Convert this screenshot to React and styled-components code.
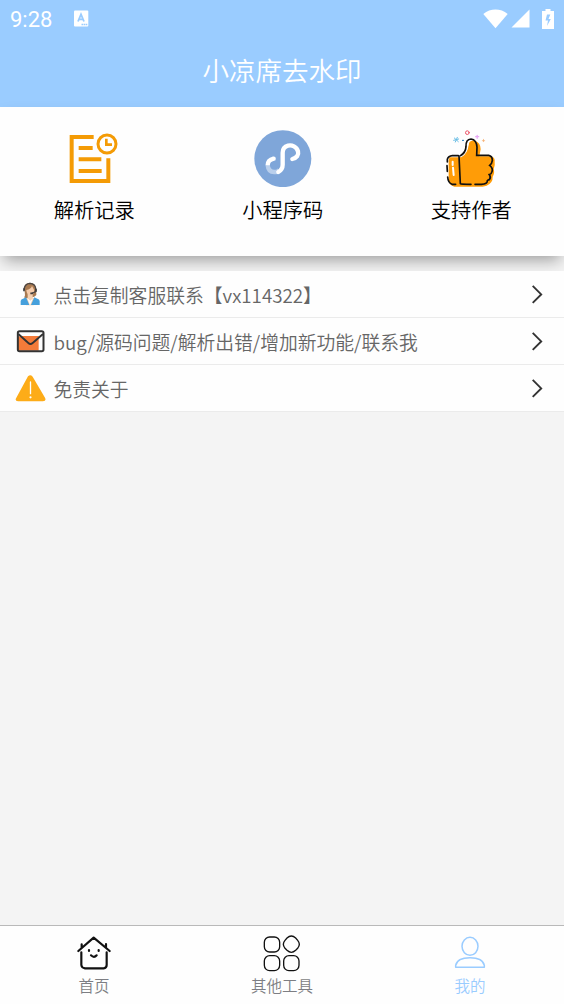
import styled, { createGlobalStyle } from 'styled-components';

const GlobalStyle = createGlobalStyle`
  * {
    box-sizing: border-box;
  }
  body {
    margin: 0;
    background-color: #f4f4f4;
    font-family: 'Noto Sans CJK SC', sans-serif;
    font-weight: 350;
  }
`;

const Page = styled.div`
  display: flex;
  flex-direction: column;
  height: 1004px;
  overflow: hidden;
`;

const Header = styled.header`
  height: 107px;
  background-color: #9accff;
  color: #fff;
`;

const StatusBar = styled.div`
  display: flex;
  align-items: center;
  height: 37px;
  padding: 0 10px;
`;

const Time = styled.span`
  width: 63.5px;
  font-family: Roboto, sans-serif;
  font-size: 22px;
  font-weight: 400;
  line-height: 37px;
  padding-top: 2px;
`;

const StatusIcons = styled.div`
  display: flex;
  align-items: center;
  margin-left: auto;
`;

const StatusIcon = styled.span`
  display: flex;
  margin-right: ${(props) => props.$gap}px;
`;

const Title = styled.h1`
  margin: 0;
  font-size: 26.5px;
  font-weight: 350;
  line-height: 66px;
  text-align: center;
`;

const Card = styled.section`
  display: grid;
  grid-template-columns: repeat(3, 188.5px);
  height: 149px;
  padding-top: 22px;
  background-color: #fefefe;
  box-shadow: 0 8px 15px -4px rgba(0, 0, 0, 0.36);
`;

const CardItem = styled.div`
  display: flex;
  flex-direction: column;
  align-items: center;
  font-size: 20.3px;
  line-height: 30px;
  color: #000;
`;

const CardIcon = styled.div`
  height: 65px;
  padding-top: ${(props) => props.$top}px;
`;

const List = styled.ul`
  margin: 15px 0 0;
  padding: 0;
  list-style: none;
`;

const Row = styled.li`
  display: flex;
  align-items: center;
  height: 47px;
  padding: 0 20px 0 15px;
  background-color: #fefefe;
  border-bottom: 1px solid #ebebeb;
  color: #666;
  font-size: 18.8px;
`;

const RowIcon = styled.span`
  display: flex;
  justify-content: center;
  width: 31px;
  margin-right: 7.5px;
`;

const RowText = styled.span`
  flex: 1;
  line-height: 28px;
  padding-top: 1px;
`;

const TabBar = styled.nav`
  display: grid;
  grid-template-columns: repeat(3, 1fr);
  height: 79px;
  margin-top: auto;
  background-color: #fefefe;
  border-top: 1px solid #b9b9b9;
`;

const Tab = styled.div`
  display: flex;
  flex-direction: column;
  align-items: center;
  padding-top: 9px;
  font-size: 15.5px;
  line-height: 24px;
  color: ${(props) => (props.$active ? '#9accff' : '#7d7e83')};
`;

const TabIcon = styled.div`
  height: 38px;
`;

const KeyboardIcon = () => (
  <svg width="15" height="17" viewBox="0 0 15 17">
    <rect x="0" y="0.5" width="14.3" height="16" rx="1" fill="#fff" />
    <path d="M4 11.5 7 4.3 10 11.5M5 9.3h4" fill="none" stroke="#9accff" strokeWidth="1.8" />
    <path d="M7.5 14.5h6" stroke="#9accff" strokeWidth="1.6" strokeDasharray="1.6 .5" />
  </svg>
);

const WifiIcon = () => (
  <svg width="25" height="20" viewBox="0 0 25 20">
    <path d="M.3 5C7.5-.9 17.5-.9 24.7 5L12.5 19.2Z" fill="#fff" />
  </svg>
);

const SignalIcon = () => (
  <svg width="19" height="19" viewBox="0 0 19 19">
    <path d="M18.5 .5V18.5H.5Z" fill="#fff" />
  </svg>
);

const BatteryIcon = () => (
  <svg width="12" height="20" viewBox="0 0 12 20">
    <path d="M3.5 0h5v2H12v18H0V2h3.5Z" fill="#fff" />
    <path d="M8.3 5.5H5L3.5 11.5h2.5L5 17l3.8-7H6.5Z" fill="#9accff" />
  </svg>
);

const RecordIcon = () => (
  <svg width="50" height="52" viewBox="89 39 150 156" fill="none" stroke="#f49b05">
    <path d="M163 51H97V183H207V115" strokeWidth="12" />
    <path d="M118 84H160M118 118H186M118 153H187" strokeWidth="12" />
    <circle cx="203" cy="72" r="27" strokeWidth="9" />
    <path d="M201 56V74H218" strokeWidth="8" />
  </svg>
);

const MiniProgramIcon = () => (
  <svg width="58" height="58" viewBox="71 26 174 174" fill="none" strokeWidth="13">
    <circle cx="157.5" cy="115" r="85.5" fill="#7fa6d9" />
    <path d="M112 134C113 146 118 156 134 155Q141 156 147 149" stroke="#b9cfec" />
    <path
      d="M186 116C199 113 206 104 203 93C199 79 185 73 173 76C162 79 157 87 157 97V133Q157 147 144 155"
      stroke="#fff"
      strokeLinecap="round"
    />
    <path d="M112 135Q112 119 130 115" stroke="#fff" />
    <circle cx="130" cy="115" r="6.5" fill="#fff" />
  </svg>
);

const ThumbIcon = () => (
  <svg width="52" height="58" viewBox="75 30 156 174" fill="none" strokeLinecap="round">
    <path
      d="M91 112H121Q142 101 145 74Q149 60 164 62Q182 67 182 88L178 109H213Q226 112 224 126Q226 136 221 148Q225 160 218 170Q219 188 200 197L188 200H103Q88 197 86 181V122Q86 115 91 112Z"
      fill="#ff9c07"
    />
    <path d="M118 108Q137 101 138 78Q139 61 149 58L146 75Q143 101 124 112Z" fill="#fff" />
    <g stroke="#111" strokeWidth="5">
      <path d="M115 107H97Q85 108 82 118V126M81 137L82 154M83 171Q84 188 96 193H107" />
      <path d="M121 107Q137 99 138 80Q137 58 153 57Q170 59 171 82L170 106H206Q217 108 217 121Q216 131 209 136Q220 145 216 155Q214 163 208 164Q214 172 208 179Q204 180 202 182Q203 192 184 193H165" />
      <path d="M117 108L121 191Q123 193 153 193" />
    </g>
    <path d="M98 125V135M99 143L101 165" stroke="#fff" strokeWidth="6" />
    <circle cx="142" cy="38" r="5.5" stroke="#ec5266" strokeWidth="3" />
    <path d="M103 54L115 65M101 61L116 57M112 52L106 66" stroke="#68bde5" strokeWidth="3" />
    <path d="M128 61h2" stroke="#1975b8" strokeWidth="4" />
    <path d="M167 50h9M171.5 46v9" stroke="#e8aaf6" strokeWidth="4" />
    <path d="M187 62h7M190.5 58v7" stroke="#f6a65f" strokeWidth="2" />
  </svg>
);

const ServiceIcon = () => (
  <svg width="21" height="24" viewBox="61 127 63 72">
    <path d="M74 143Q75 130 91 129Q107 130 109 145L110 166Q104 174 96 172L77 178Q72 175 76 167Z" fill="#a97a50" />
    <path d="M84 163H99V174L110 178L102 197H79L74 178L84 174Z" fill="#f4d2b4" />
    <path d="M80 151Q94 148 97 139L103 150V159Q98 169 91 169Q81 165 80 151Z" fill="#f5cbaa" />
    <path d="M79 173L89 196H63V184Q64 178 70 177ZM104 173L94 196H120V184Q119 178 113 177Z" fill="#46a0dc" />
    <path d="M83 176L91 197L100 176L92 183Z" fill="#fff" />
    <path d="M74 151V145Q77 132 91 131Q106 132 108 146V156L97 161" fill="none" stroke="#4a4543" strokeWidth="4" />
    <path d="M73 146V155M109 147V156M92 161H100" stroke="#403d3d" strokeWidth="5" />
  </svg>
);

const MailIcon = () => (
  <svg width="29" height="23" viewBox="48 270 87 69" fill="none">
    <path d="M54 289H116V332H54Z" fill="#f47b39" />
    <path d="M55 277L91 313L128 277Z" fill="#fff" />
    <path d="M60 288L91 314L118 288Z" fill="#f47b39" />
    <rect x="53.5" y="273.5" width="77" height="60" rx="5" stroke="#333" strokeWidth="6" />
    <path d="M55 282L85 309Q91 315 98 309L129 282" stroke="#333" strokeWidth="5.5" />
  </svg>
);

const WarningIcon = () => (
  <svg width="31" height="28" viewBox="45 401 93 84">
    <path d="M84 408Q91 401 98 409L135 472Q140 482 129 483H54Q43 481 49 472Z" fill="#fdac18" />
    <path d="M91.5 425V460" stroke="#fff" strokeWidth="4" strokeLinecap="round" />
    <circle cx="91.5" cy="471" r="3.3" fill="#fff" />
  </svg>
);

const ArrowIcon = () => (
  <svg width="14" height="20" viewBox="0 0 14 20">
    <path d="M2.7 1.9L11.2 10.4L2.7 18.9" fill="none" stroke="#333" strokeWidth="1.9" />
  </svg>
);

const HomeIcon = () => (
  <svg
    width="34"
    height="36"
    viewBox="81 61 102 108"
    fill="none"
    stroke="#111"
    strokeWidth="6.5"
    strokeLinecap="round"
    strokeLinejoin="round"
  >
    <path d="M85 109L131 69L179 109M95 89V99M168 88V98" />
    <path d="M94 113V151Q95 160 105 161H161Q170 160 170 151V113" />
    <path d="M117 106V109M146 106V109M123 122Q132 131 140 122" />
  </svg>
);

const ToolsIcon = () => (
  <svg width="38" height="37" viewBox="639 60 114 111" fill="none" stroke="#111" strokeWidth="4">
    <rect x="643" y="66" width="46" height="45" rx="16" />
    <rect x="643" y="122" width="46" height="45" rx="16" />
    <rect x="701" y="122" width="46" height="45" rx="16" />
    <path d="M711 69Q724 57 737 69L743 76Q753 88 743 100L737 106Q724 118 711 106L705 100Q695 88 705 76Z" />
  </svg>
);

const UserIcon = () => (
  <svg width="32" height="34" viewBox="72 62 96 102" fill="none" stroke="#9accff" strokeWidth="4.5">
    <ellipse cx="120" cy="96" rx="24" ry="27" />
    <path d="M77 159V153C80 138 96 130 120 130C144 130 160 138 163 153V159Z" strokeLinejoin="round" />
  </svg>
);

const cards = [
  { label: '解析记录', icon: <RecordIcon />, top: 4 },
  { label: '小程序码', icon: <MiniProgramIcon />, top: 0 },
  { label: '支持作者', icon: <ThumbIcon />, top: 1 },
];

const rows = [
  { label: '点击复制客服联系【vx114322】', icon: <ServiceIcon /> },
  { label: 'bug/源码问题/解析出错/增加新功能/联系我', icon: <MailIcon /> },
  { label: '免责关于', icon: <WarningIcon /> },
];

const tabs = [
  { label: '首页', icon: <HomeIcon /> },
  { label: '其他工具', icon: <ToolsIcon /> },
  { label: '我的', icon: <UserIcon />, active: true },
];

const App = () => {
  return (
    <Page>
      <GlobalStyle />
      <Header>
        <StatusBar>
          <Time>9:28</Time>
          <KeyboardIcon />
          <StatusIcons>
            <StatusIcon $gap={3.5}><WifiIcon /></StatusIcon>
            <StatusIcon $gap={12}><SignalIcon /></StatusIcon>
            <BatteryIcon />
          </StatusIcons>
        </StatusBar>
        <Title>小凉席去水印</Title>
      </Header>
      <Card>
        {cards.map((card) => (
          <CardItem key={card.label}>
            <CardIcon $top={card.top}>{card.icon}</CardIcon>
            {card.label}
          </CardItem>
        ))}
      </Card>
      <List>
        {rows.map((row) => (
          <Row key={row.label}>
            <RowIcon>{row.icon}</RowIcon>
            <RowText>{row.label}</RowText>
            <ArrowIcon />
          </Row>
        ))}
      </List>
      <TabBar>
        {tabs.map((tab) => (
          <Tab key={tab.label} $active={tab.active}>
            <TabIcon>{tab.icon}</TabIcon>
            {tab.label}
          </Tab>
        ))}
      </TabBar>
    </Page>
  );
};

export default App;
